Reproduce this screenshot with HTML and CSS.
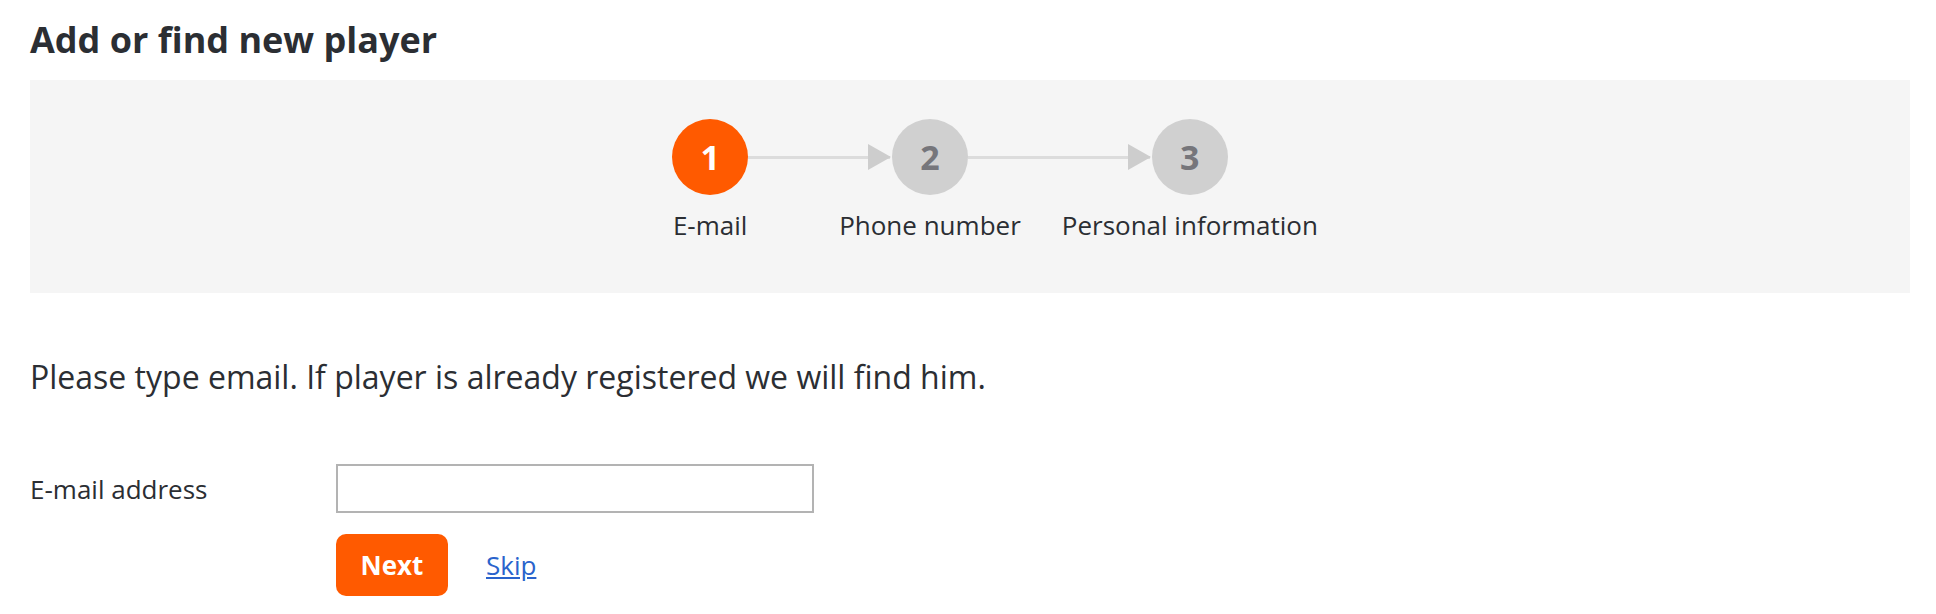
FILE: index.html
```html
<!DOCTYPE html>
<html lang="en">
<head>
    <meta charset="UTF-8">
    <meta name="viewport" content="width=device-width, initial-scale=1.0">
    <title>Add or find new player</title>
    <link rel="stylesheet" href="styles.css">
</head>
<body>

<div class="page">
    <h1>Add or find new player</h1>

    <div class="wizard">
        <ol class="steps">
            <li class="step active">
                <span class="step-num">1</span>
                <span class="step-label">E-mail</span>
            </li>
            <li class="step">
                <span class="step-arrow short"></span>
                <span class="step-num">2</span>
                <span class="step-label">Phone number</span>
            </li>
            <li class="step">
                <span class="step-arrow long"></span>
                <span class="step-num">3</span>
                <span class="step-label">Personal information</span>
            </li>
        </ol>
    </div>

    <p class="intro">Please type email. If player is already registered we will find him.</p>

    <form id="emailForm">
        <div class="form-row">
            <label for="email">E-mail address</label>
            <input type="email" id="email" name="email">
        </div>
        <div class="form-row actions">
            <button type="submit">Next</button>
            <a href="#" class="skip">Skip</a>
        </div>
    </form>
</div>

</body>
</html>
```

FILE: styles.css
```css
body {
    font-family: "Open Sans", "Noto Sans", Arial, sans-serif;
    margin: 0;
    background-color: #fff;
    color: #2b2e33;
}

.page {
    padding: 15px 26px 0 30px;
}

h1 {
    margin: 0 0 16px;
    font-size: 36px;
    font-weight: bold;
    color: #2b2e33;
}

.wizard {
    background: #f5f5f5;
    padding: 39px 0 50px;
}

.steps {
    list-style: none;
    margin: 0;
    padding: 0;
    display: flex;
    justify-content: center;
    gap: 41px;
}

.step {
    position: relative;
    min-width: 176px;
    display: flex;
    flex-direction: column;
    align-items: center;
}

.step-num {
    width: 76px;
    height: 76px;
    border-radius: 50%;
    background: #d0d0d0;
    color: #76767b;
    font-size: 34px;
    font-weight: bold;
    display: flex;
    align-items: center;
    justify-content: center;
}

.step.active .step-num {
    background: #ff5a00;
    color: #fff;
}

.step-label {
    margin-top: 12px;
    font-size: 26px;
    white-space: nowrap;
    color: #2b2e33;
}

.step-arrow {
    position: absolute;
    top: 37px;
    right: calc(50% + 40px);
    height: 3px;
    background: #dcdcdc;
}

.step-arrow::after {
    content: "";
    position: absolute;
    right: -1px;
    top: -12px;
    border-top: 13px solid transparent;
    border-bottom: 13px solid transparent;
    border-left: 23px solid #cdcdcd;
}

.step-arrow.short {
    width: 142px;
}

.step-arrow.long {
    width: 182px;
}

.intro {
    margin: 62px 0 66px;
    font-size: 32px;
}

.form-row {
    display: flex;
    align-items: center;
}

.form-row label {
    width: 306px;
    font-size: 26px;
}

.form-row input {
    width: 478px;
    height: 49px;
    box-sizing: border-box;
    border: 2px solid #b3b3b3;
    border-radius: 0;
    font-size: 22px;
    padding: 0 10px;
}

.actions {
    margin-top: 21px;
    padding-left: 306px;
}

.actions button {
    width: 112px;
    height: 62px;
    background-color: #ff5a00;
    color: white;
    border: none;
    border-radius: 10px;
    font-family: inherit;
    font-size: 26px;
    font-weight: bold;
    cursor: pointer;
}

.actions button:hover {
    background-color: #e85200;
}

.skip {
    margin-left: 38px;
    font-size: 26px;
    color: #2a63cc;
}
```
